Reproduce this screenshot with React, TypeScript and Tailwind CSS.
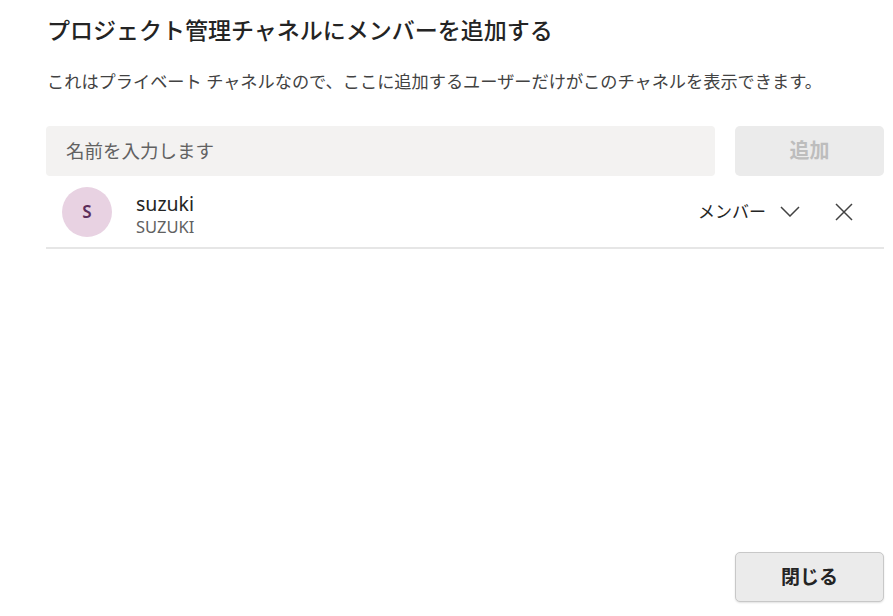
const font = { fontFamily: '"Noto Sans", "Noto Sans CJK JP", sans-serif' };

export default function App() {
    return (
        <div
            className="w-[893px] h-[616px] bg-white flex flex-col pl-[46px] pr-[9px] text-[#242424]"
            style={font}
        >
            <h1 className="pt-[13px] text-[23px] leading-[34px] font-medium pl-px">
                プロジェクト管理チャネルにメンバーを追加する
            </h1>
            <p className="mt-[23px] text-[17.2px] leading-[24px] text-[#424242] pl-px">
                これはプライベート チャネルなので、ここに追加するユーザーだけがこのチャネルを表示できます。
            </p>

            <div className="mt-[32px] flex gap-[20px]">
                <div className="flex-1 h-[50px] rounded-[4px] bg-[#f3f2f1] flex items-center px-[20px] text-[18.5px] text-[#616161]">
                    名前を入力します
                </div>
                <button className="w-[149px] h-[50px] rounded-[5px] bg-[#ebebeb] text-[20px] font-semibold text-[#bdbdbd]">
                    追加
                </button>
            </div>

            <div className="h-[73px] flex items-center border-b-2 border-[#e6e6e6]">
                <div className="ml-[16px] w-[50px] h-[50px] rounded-full bg-[#e8d2e2] flex items-center justify-center text-[17px] font-semibold text-[#5c2e5b]">
                    S
                </div>
                <div className="ml-[24px] pt-[6px] flex flex-col">
                    <span className="text-[19.5px] leading-[24px] text-[#242424]">suzuki</span>
                    <span className="text-[16.5px] leading-[22px] text-[#616161]">SUZUKI</span>
                </div>
                <div className="ml-auto flex items-center text-[17px] text-[#242424]">
                    <span>メンバー</span>
                    <svg className="ml-[14px]" width="20" height="11" viewBox="0 0 20 11" fill="none">
                        <path d="M1 1 L10 10 L19 1" stroke="#424242" strokeWidth="1.5" />
                    </svg>
                    <svg className="ml-[35px] mr-[31px]" width="18" height="18" viewBox="0 0 18 18" fill="none">
                        <path d="M1 1 L17 17 M17 1 L1 17" stroke="#424242" strokeWidth="1.5" />
                    </svg>
                </div>
            </div>

            <div className="flex-1" />

            <div className="flex justify-end pb-[14px]">
                <button className="w-[149px] h-[50px] rounded-[5px] bg-[#ebebeb] border border-[#c8c8c8] shadow-[0_1px_2px_rgba(0,0,0,0.12)] text-[19px] font-semibold text-[#242424]">
                    閉じる
                </button>
            </div>
        </div>
    );
}
